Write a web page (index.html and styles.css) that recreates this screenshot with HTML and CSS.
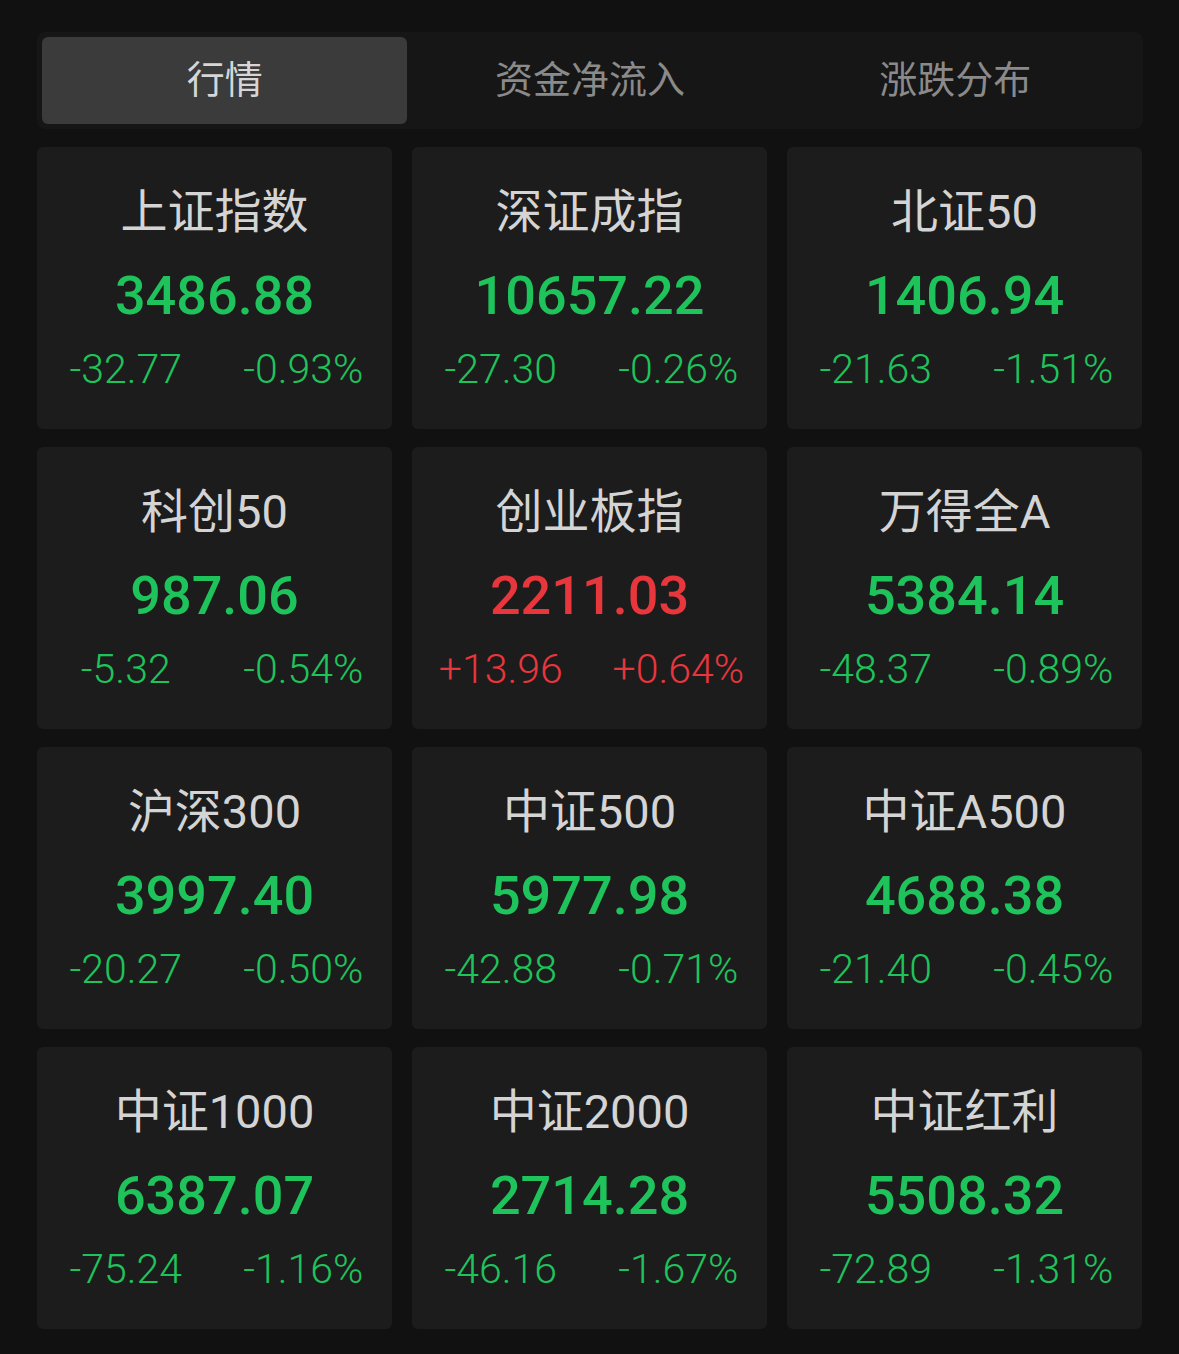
FILE: index.html
```html
<!DOCTYPE html>
<html lang="zh-CN">
<head>
    <meta charset="UTF-8">
    <meta name="viewport" content="width=device-width, initial-scale=1.0">
    <title>行情</title>
    <link rel="stylesheet" href="styles.css">
</head>
<body>
    <div class="page">
        <div class="tab-bar">
            <div class="tab active">行情</div>
            <div class="tab">资金净流入</div>
            <div class="tab">涨跌分布</div>
        </div>

        <div class="index-grid">
            <div class="index-card down">
                <div class="index-name">上证指数</div>
                <div class="index-value">3486.88</div>
                <div class="index-change"><span>-32.77</span><span>-0.93%</span></div>
            </div>
            <div class="index-card down">
                <div class="index-name">深证成指</div>
                <div class="index-value">10657.22</div>
                <div class="index-change"><span>-27.30</span><span>-0.26%</span></div>
            </div>
            <div class="index-card down">
                <div class="index-name">北证50</div>
                <div class="index-value">1406.94</div>
                <div class="index-change"><span>-21.63</span><span>-1.51%</span></div>
            </div>

            <div class="index-card down">
                <div class="index-name">科创50</div>
                <div class="index-value">987.06</div>
                <div class="index-change"><span>-5.32</span><span>-0.54%</span></div>
            </div>
            <div class="index-card up">
                <div class="index-name">创业板指</div>
                <div class="index-value">2211.03</div>
                <div class="index-change"><span>+13.96</span><span>+0.64%</span></div>
            </div>
            <div class="index-card down">
                <div class="index-name">万得全A</div>
                <div class="index-value">5384.14</div>
                <div class="index-change"><span>-48.37</span><span>-0.89%</span></div>
            </div>

            <div class="index-card down">
                <div class="index-name">沪深300</div>
                <div class="index-value">3997.40</div>
                <div class="index-change"><span>-20.27</span><span>-0.50%</span></div>
            </div>
            <div class="index-card down">
                <div class="index-name">中证500</div>
                <div class="index-value">5977.98</div>
                <div class="index-change"><span>-42.88</span><span>-0.71%</span></div>
            </div>
            <div class="index-card down">
                <div class="index-name">中证A500</div>
                <div class="index-value">4688.38</div>
                <div class="index-change"><span>-21.40</span><span>-0.45%</span></div>
            </div>

            <div class="index-card down">
                <div class="index-name">中证1000</div>
                <div class="index-value">6387.07</div>
                <div class="index-change"><span>-75.24</span><span>-1.16%</span></div>
            </div>
            <div class="index-card down">
                <div class="index-name">中证2000</div>
                <div class="index-value">2714.28</div>
                <div class="index-change"><span>-46.16</span><span>-1.67%</span></div>
            </div>
            <div class="index-card down">
                <div class="index-name">中证红利</div>
                <div class="index-value">5508.32</div>
                <div class="index-change"><span>-72.89</span><span>-1.31%</span></div>
            </div>
        </div>
    </div>
</body>
</html>
```

FILE: styles.css
```css
:root {
    --bg: #111111;
    --panel: #161616;
    --card: #1c1c1c;
    --tab-active: #3b3b3b;
    --green: #1fc35c;
    --red: #e8363d;
}

* {
    margin: 0;
    padding: 0;
    box-sizing: border-box;
}

body {
    background: var(--bg);
    font-family: Roboto, 'Noto Sans CJK SC', sans-serif;
}

.page {
    padding: 32px 36px 24px 37px;
}

.tab-bar {
    display: grid;
    grid-template-columns: repeat(3, 1fr);
    padding: 5px;
    background: var(--panel);
    border-radius: 8px;
}

.tab {
    height: 87px;
    line-height: 87px;
    text-align: center;
    font-size: 38px;
    color: #8a8a8a;
    border-radius: 6px;
}

.tab.active {
    background: var(--tab-active);
    color: #d6d6d6;
}

.index-grid {
    display: grid;
    grid-template-columns: repeat(3, 355px);
    grid-auto-rows: 282px;
    column-gap: 20px;
    row-gap: 18px;
    margin-top: 18px;
}

.index-card {
    background: var(--card);
    border-radius: 6px;
    padding-top: 37px;
    text-align: center;
}

.index-name {
    font-size: 47px;
    line-height: 56px;
    color: #d4d4d4;
}

.index-value {
    margin-top: 23px;
    font-size: 54px;
    line-height: 66px;
    font-weight: 500;
}

.index-change {
    display: grid;
    grid-template-columns: 1fr 1fr;
    margin-top: 15px;
    font-size: 41px;
    line-height: 50px;
    font-weight: 300;
}

.down .index-value,
.down .index-change {
    color: var(--green);
}

.up .index-value,
.up .index-change {
    color: var(--red);
}
```
